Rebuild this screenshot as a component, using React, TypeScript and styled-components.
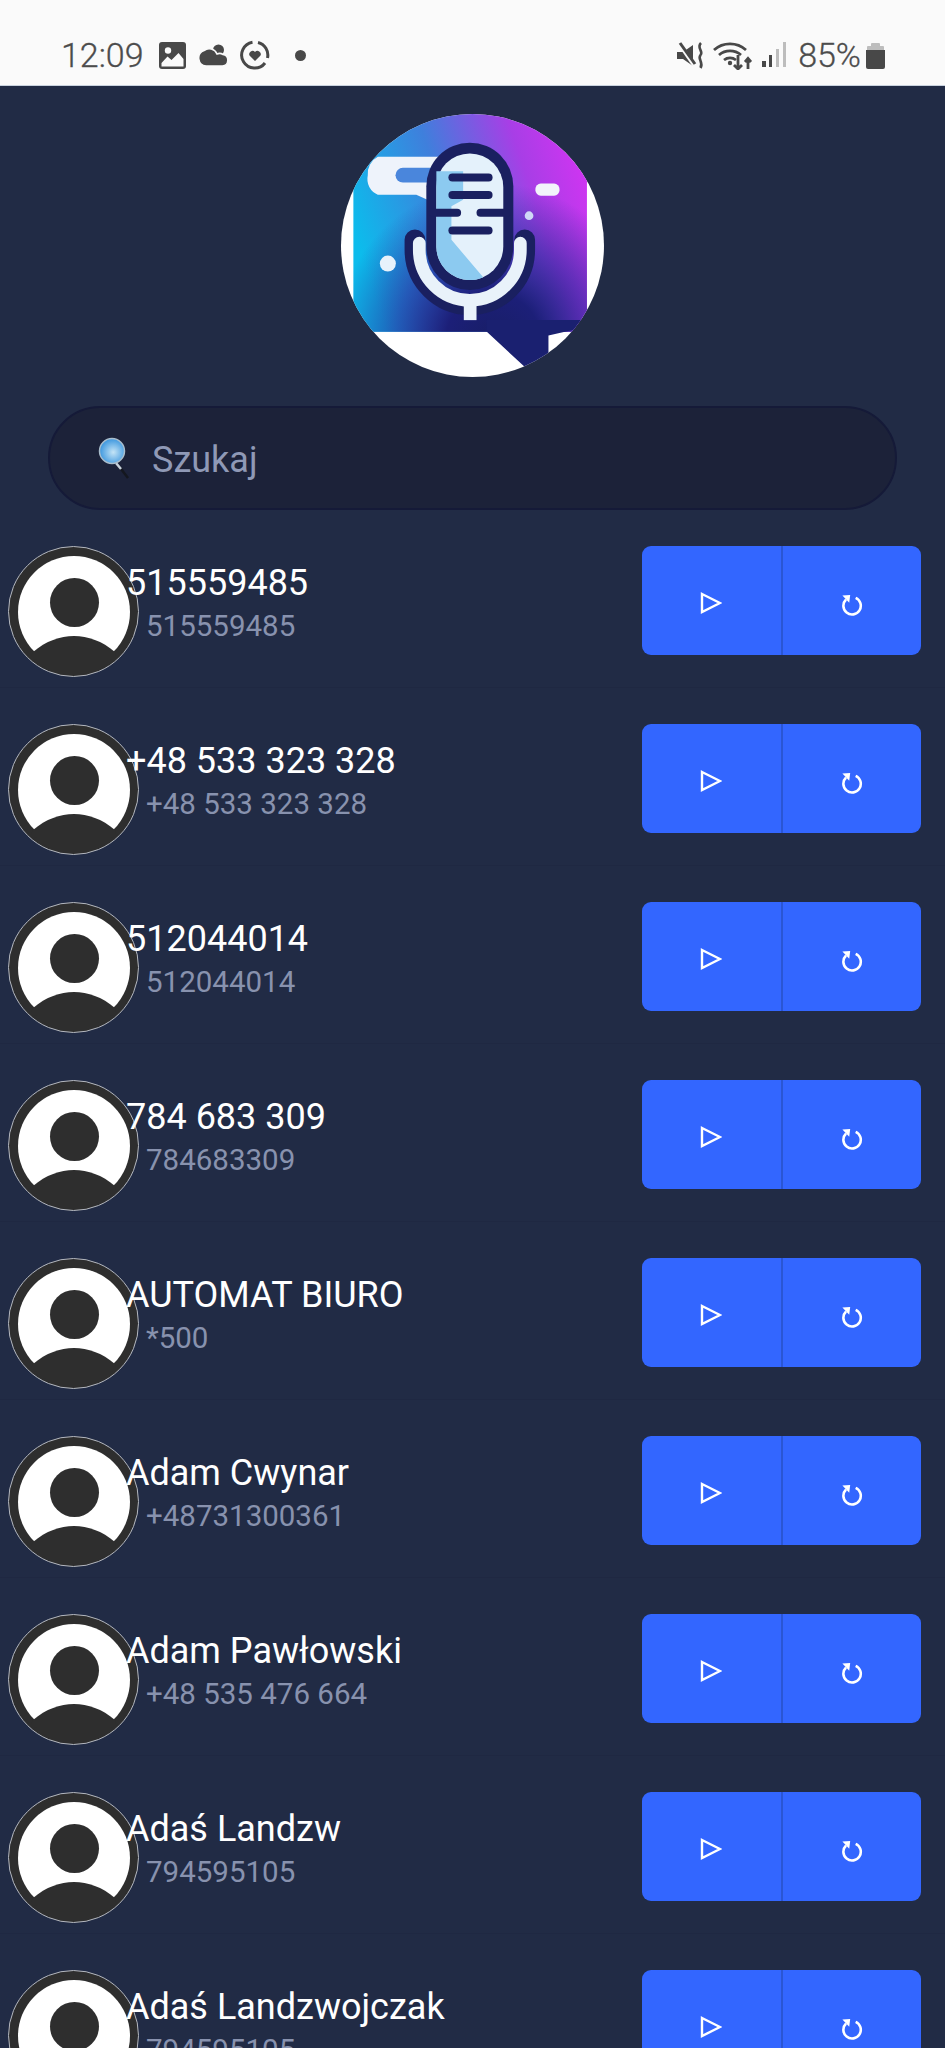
import React from "react";
import styled, { createGlobalStyle } from "styled-components";

const GlobalStyle = createGlobalStyle`
  html, body {
    margin: 0;
    padding: 0;
    height: 2048px;
    overflow: hidden;
    background: #212b45;
    font-family: "Roboto", "Liberation Sans", sans-serif;
  }
`;

const Screen = styled.div`
  width: 945px;
  height: 2048px;
  overflow: hidden;
  background: #212b45;
`;

const StatusBar = styled.div`
  height: 86px;
  box-sizing: border-box;
  padding: 25px 60px 0 61px;
  display: flex;
  align-items: center;
  justify-content: space-between;
  background: #fafafa;
  color: #4c4c4c;
  border-bottom: 1px solid #c9d2de;
`;

const StatusGroup = styled.div`
  display: flex;
  align-items: center;
`;

const StatusText = styled.span`
  font-size: 34px;
  font-weight: 300;
  line-height: 38px;
  -webkit-text-stroke: 0.3px #4c4c4c;
`;

const LeftIcons = styled.div`
  display: flex;
  align-items: center;
  gap: 12px;
  margin-left: 15px;
`;

const RightIcons = styled.div`
  display: flex;
  align-items: center;
  gap: 9px;
  margin-right: 12px;
`;

const BatteryWrap = styled.span`
  display: flex;
  margin-left: 5px;
`;

const Dot = styled.span`
  width: 11px;
  height: 11px;
  border-radius: 50%;
  background: #484848;
  margin-left: 25px;
`;

const Header = styled.div`
  display: flex;
  justify-content: center;
  padding-top: 28px;
`;

const Logo = styled.svg`
  width: 263px;
  height: 263px;
  display: block;
`;

const SearchBox = styled.div`
  height: 104px;
  box-sizing: border-box;
  margin: 29px 48px 0;
  padding-left: 48px;
  display: flex;
  align-items: center;
  gap: 22px;
  background: #1c2239;
  border: 2px solid #151a38;
  border-radius: 52px;
`;

const SearchLabel = styled.span`
  font-size: 36px;
  color: #8f99b6;
  padding-top: 3px;
`;

const List = styled.div`
  display: flex;
  flex-direction: column;
`;

const Row = styled.div`
  height: 178px;
  box-sizing: border-box;
  flex: none;
  padding: 36px 24px 0 8px;
  display: flex;
  align-items: flex-start;
  border-bottom: 1px solid #1f2842;
`;

const Avatar = styled.svg`
  width: 131px;
  height: 131px;
  flex: none;
  display: block;
`;

const Info = styled.div`
  margin: 16px 0 0 -13px;
  display: flex;
  flex-direction: column;
  gap: 1px;
`;

const Name = styled.div`
  font-size: 36px;
  line-height: 42px;
  color: #ffffff;
`;

const Number = styled.div`
  font-size: 29.5px;
  line-height: 42px;
  color: #8892ae;
  padding-left: 20px;
`;

const Actions = styled.div`
  margin-left: auto;
  width: 279px;
  height: 109px;
  display: flex;
  border-radius: 9px;
  overflow: hidden;
  background: #3366ff;
`;

const ActionButton = styled.div<{ $divided?: boolean }>`
  flex: 1;
  display: flex;
  align-items: center;
  justify-content: center;
  padding-top: ${(props) => (props.$divided ? "9px" : "5px")};
  border-left: ${(props) => (props.$divided ? "2px solid #2a56d4" : "none")};
`;

const contacts = [
  { name: "515559485", phone: "515559485" },
  { name: "+48 533 323 328", phone: "+48 533 323 328" },
  { name: "512044014", phone: "512044014" },
  { name: "784 683 309", phone: "784683309" },
  { name: "AUTOMAT BIURO", phone: "*500" },
  { name: "Adam Cwynar", phone: "+48731300361" },
  { name: "Adam Pawłowski", phone: "+48 535 476 664" },
  { name: "Adaś Landzw", phone: "794595105" },
  { name: "Adaś Landzwojczak", phone: "794595105" },
];

function GalleryIcon() {
  return (
    <svg width="27" height="27" viewBox="0 0 27 27">
      <rect width="27" height="27" rx="3" fill="#484848" />
      <circle cx="9" cy="8.5" r="3.2" fill="#fafafa" />
      <path d="M2.5 21 L8.5 14.5 L12.5 18 L19.5 11 L24.5 17 V24.5 H2.5Z" fill="#fafafa" />
    </svg>
  );
}

function CloudIcon() {
  return (
    <svg width="30" height="22" viewBox="0 0 30 22">
      <circle cx="20.5" cy="6" r="5.5" fill="#484848" />
      <path d="M8 22 A8 8 0 0 1 6 6.5 A8.5 8.5 0 0 1 19 10 A6 6 0 0 1 25 10.5 A5.8 5.8 0 0 1 24.5 22 Z" fill="#484848" stroke="#fafafa" strokeWidth="1.6" />
    </svg>
  );
}

function HeartRingIcon() {
  return (
    <svg width="30" height="30" viewBox="0 0 30 30">
      <path d="M18 2.5 A13 13 0 0 1 27.5 18 M25 23 A13 13 0 1 1 12.5 2.3" fill="none" stroke="#484848" strokeWidth="3" />
      <path d="M15 21 L9.5 15.5 A3.3 3.3 0 0 1 15 12 A3.3 3.3 0 0 1 20.5 15.5Z" fill="#484848" />
    </svg>
  );
}

function MuteIcon() {
  return (
    <svg width="27" height="27" viewBox="0 0 27 27">
      <path d="M0 10 H6 L16 3 V24 L6 17 H0Z" fill="#484848" />
      <path d="M1 0 L17 23" stroke="#fafafa" strokeWidth="4" />
      <path d="M3 1 L18 22" stroke="#484848" strokeWidth="3" />
      <path d="M24 1 C19 6 27 9 23.5 13 C20 17 27 20 23.5 26" fill="none" stroke="#484848" strokeWidth="2.6" />
    </svg>
  );
}

function WifiIcon() {
  return (
    <svg width="40" height="30" viewBox="0 0 40 30">
      <g fill="none" stroke="#484848" strokeWidth="2.8">
        <path d="M1 10 A24 24 0 0 1 33 10" />
        <path d="M6 15 A17 17 0 0 1 28 15" />
        <path d="M11 20 A10 10 0 0 1 23 20" />
        <path d="M25 15 V29 M21 25 L25 29 L29 25" />
        <path d="M35 29 V19 M32 22 L35 18.5 L38 22" />
      </g>
      <circle cx="17" cy="23" r="2.2" fill="#484848" />
    </svg>
  );
}

function SignalIcon() {
  return (
    <svg width="24" height="26" viewBox="0 0 24 26">
      <rect x="0" y="19" width="4" height="6" fill="#484848" />
      <rect x="7" y="13" width="3" height="12" fill="#484848" />
      <rect x="14" y="7" width="3" height="18" fill="#bdbdbd" />
      <rect x="21" y="0" width="3" height="25" fill="#bdbdbd" />
    </svg>
  );
}

function BatteryIcon() {
  return (
    <svg width="19" height="27" viewBox="0 0 19 27">
      <path d="M5 2 A1 1 0 0 1 6 1 H13 A1 1 0 0 1 14 2 V4 H5Z" fill="#bdbdbd" />
      <path d="M1 5 A1 1 0 0 1 2 4 H17 A1 1 0 0 1 18 5 V8 H1Z" fill="#bdbdbd" />
      <path d="M0 8 H19 V25 A2 2 0 0 1 17 27 H2 A2 2 0 0 1 0 25Z" fill="#484848" />
    </svg>
  );
}

function AppLogo() {
  return (
    <Logo viewBox="65 44 786 786">
      <defs>
        <clipPath id="logoClip">
          <circle cx="458" cy="437" r="393" />
        </clipPath>
        <linearGradient id="logoBase" gradientUnits="userSpaceOnUse" x1="110" y1="420" x2="800" y2="190">
          <stop offset="0" stopColor="#0cbcec" />
          <stop offset="0.4" stopColor="#3f7fdc" />
          <stop offset="0.75" stopColor="#a83ee6" />
          <stop offset="1" stopColor="#d234f2" />
        </linearGradient>
        <radialGradient id="logoShade" gradientUnits="userSpaceOnUse" cx="520" cy="720" r="470">
          <stop offset="0" stopColor="#181e66" />
          <stop offset="0.3" stopColor="#1c1f78" />
          <stop offset="0.62" stopColor="#2a2498" stopOpacity="0.6" />
          <stop offset="1" stopColor="#2a2498" stopOpacity="0" />
        </radialGradient>
      </defs>
      <g clipPath="url(#logoClip)">
        <rect x="65" y="44" width="786" height="786" fill="#ffffff" />
        <rect x="102" y="20" width="698" height="675" fill="url(#logoBase)" />
        <rect x="102" y="20" width="698" height="675" fill="url(#logoShade)" />
        <path d="M500 694 L625 810 L685 770 V706 L800 680 V660 H500Z" fill="#1a2070" />
      </g>
      <path d="M175 172 H400 V185 H345 V310 L290 285 H175 A50 50 0 0 1 145 228 A56 56 0 0 1 175 172Z" fill="#eef3fb" />
      <rect x="228" y="205" width="130" height="44" rx="22" fill="#4a86dc" />
      <rect x="646" y="252" width="72" height="36" rx="16" fill="#f2f4fb" />
      <circle cx="627" cy="348" r="13" fill="#cfd8f6" />
      <circle cx="205" cy="491" r="24" fill="#e8f2fb" />
      <path d="M286 420 V450 A164 164 0 0 0 614 450 V420" fill="none" stroke="#1a2060" strokeWidth="62" strokeLinecap="round" />
      <path d="M299 430 V450 A151 151 0 0 0 601 450 V430" fill="none" stroke="#e9f2fa" strokeWidth="38" strokeLinecap="round" />
      <rect x="432" y="600" width="38" height="60" fill="#e9f2fa" />
      <rect x="320" y="130" width="260" height="440" rx="130" fill="#1a2060" />
      <rect x="350" y="162" width="200" height="378" rx="100" fill="#e4f1fb" />
      <path d="M355 215 H430 V300 L395 320 V420 L490 532 A100 100 0 0 1 350 440 V215Z" fill="#8ccaf0" />
      <g stroke="#1a2060" strokeWidth="24" strokeLinecap="round">
        <path d="M398 234 H506" />
        <path d="M398 286 H506" />
        <path d="M340 339 H412" />
        <path d="M482 339 H560" />
        <path d="M398 392 H506" />
      </g>
    </Logo>
  );
}

function MagnifierIcon() {
  return (
    <svg width="32" height="42" viewBox="0 0 32 42">
      <defs>
        <radialGradient id="lens" cx="0.55" cy="0.55" r="0.6">
          <stop offset="0" stopColor="#c4e4f6" />
          <stop offset="1" stopColor="#2f8fdc" />
        </radialGradient>
      </defs>
      <path d="M20 28 L30 41" stroke="#14171f" strokeWidth="2.5" />
      <path d="M18 26 L23 32" stroke="#c8d2dc" strokeWidth="2.5" />
      <circle cx="14" cy="14" r="12.5" fill="url(#lens)" stroke="#a9bdcc" strokeWidth="1.5" />
    </svg>
  );
}

function AvatarIcon() {
  return (
    <Avatar viewBox="0 0 131 131">
      <circle cx="65.5" cy="65.5" r="65" fill="#2e2e2e" stroke="#b4b8c0" strokeWidth="1" />
      <circle cx="66" cy="66" r="56" fill="#ffffff" />
      <circle cx="66.5" cy="56.5" r="24.5" fill="#2e2e2e" />
      <path d="M25 106 C38 95 52 90 66 90 C80 90 94 95 107 106 L108 110 L90 124 H41 L23 110Z" fill="#2e2e2e" />
    </Avatar>
  );
}

function PlayIcon() {
  return (
    <svg width="22" height="22" viewBox="0 0 22 22">
      <path d="M2 2 L20 11 L2 20Z" fill="none" stroke="#ffffff" strokeWidth="2.4" strokeLinejoin="miter" />
    </svg>
  );
}

function ReloadIcon() {
  return (
    <svg width="22" height="22" viewBox="0 0 24 24">
      <path d="M5.5 6 A9.5 9.5 0 1 0 16 4.2" fill="none" stroke="#ffffff" strokeWidth="2.8" />
      <path d="M1.5 1.5 L10 1 L9 9.5Z" fill="#ffffff" />
    </svg>
  );
}

export default function App() {
  return (
    <Screen>
      <GlobalStyle />
      <StatusBar>
        <StatusGroup>
          <StatusText>12:09</StatusText>
          <LeftIcons>
            <GalleryIcon />
            <CloudIcon />
            <HeartRingIcon />
          </LeftIcons>
          <Dot />
        </StatusGroup>
        <StatusGroup>
          <RightIcons>
            <MuteIcon />
            <WifiIcon />
            <SignalIcon />
          </RightIcons>
          <StatusText>85%</StatusText>
          <BatteryWrap>
            <BatteryIcon />
          </BatteryWrap>
        </StatusGroup>
      </StatusBar>
      <Header>
        <AppLogo />
      </Header>
      <SearchBox>
        <MagnifierIcon />
        <SearchLabel>Szukaj</SearchLabel>
      </SearchBox>
      <List>
        {contacts.map((contact) => (
          <Row key={contact.name}>
            <AvatarIcon />
            <Info>
              <Name>{contact.name}</Name>
              <Number>{contact.phone}</Number>
            </Info>
            <Actions>
              <ActionButton>
                <PlayIcon />
              </ActionButton>
              <ActionButton $divided>
                <ReloadIcon />
              </ActionButton>
            </Actions>
          </Row>
        ))}
      </List>
    </Screen>
  );
}
